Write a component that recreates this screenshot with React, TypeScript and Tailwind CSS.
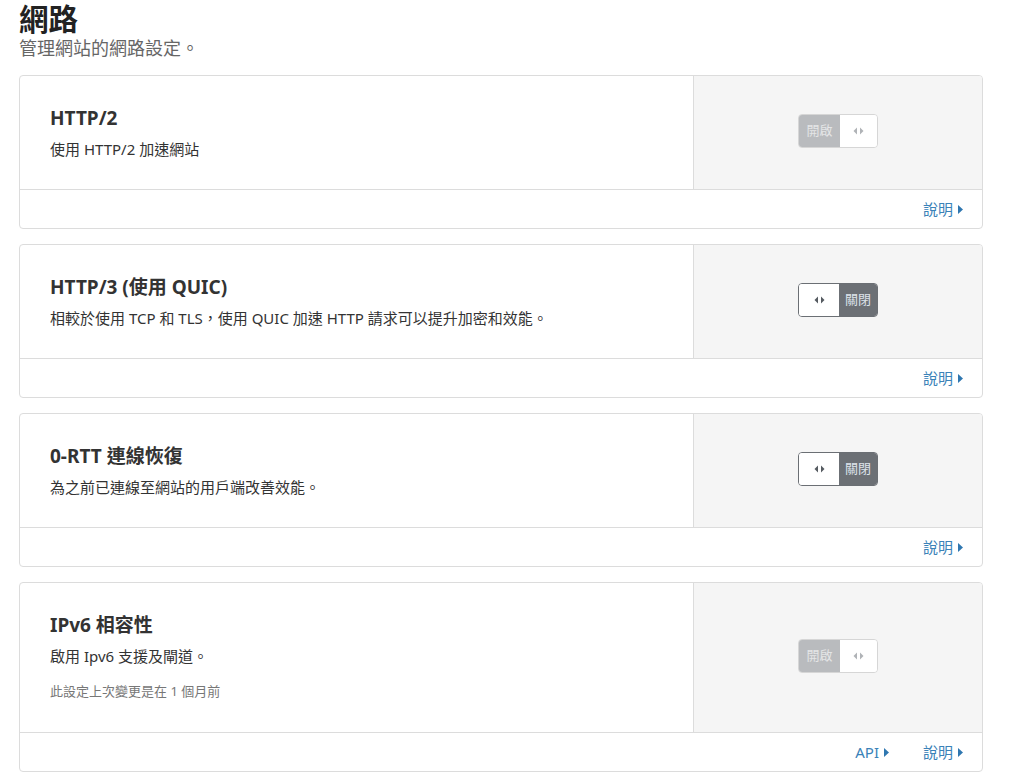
import React from "react";

type Setting = {
  title: string;
  desc: string;
  on: boolean;
  note?: string;
  api?: boolean;
};

const settings: Setting[] = [
  { title: "HTTP/2", desc: "使用 HTTP/2 加速網站", on: true },
  {
    title: "HTTP/3 (使用 QUIC)",
    desc: "相較於使用 TCP 和 TLS，使用 QUIC 加速 HTTP 請求可以提升加密和效能。",
    on: false,
  },
  { title: "0-RTT 連線恢復", desc: "為之前已連線至網站的用戶端改善效能。", on: false },
  {
    title: "IPv6 相容性",
    desc: "啟用 Ipv6 支援及閘道。",
    on: true,
    note: "此設定上次變更是在 1 個月前",
    api: true,
  },
];

function Arrows({ dark }: { dark: boolean }) {
  return (
    <svg width="11" height="8" viewBox="0 0 11 8" className={dark ? "fill-[#555a60]" : "fill-[#b0b3b7]"}>
      <path d="M4 0.5 L0.5 4 L4 7.5 Z" />
      <path d="M7 0.5 L10.5 4 L7 7.5 Z" />
    </svg>
  );
}

function Toggle({ on }: { on: boolean }) {
  if (on) {
    return (
      <div className="flex h-[34px] w-[80px] overflow-hidden rounded-[4px] border border-[#d6d6d6]">
        <div className="flex w-[41px] items-center justify-center bg-[#b9bbbe] text-[13px] text-[#e4e5e6]">
          開啟
        </div>
        <div className="flex flex-1 items-center justify-center bg-white">
          <Arrows dark={false} />
        </div>
      </div>
    );
  }
  return (
    <div className="flex h-[34px] w-[80px] overflow-hidden rounded-[4px] border border-[#6b6f74]">
      <div className="flex w-[40px] items-center justify-center bg-white">
        <Arrows dark />
      </div>
      <div className="flex flex-1 items-center justify-center bg-[#6c7075] text-[13px] text-[#dde3ea]">
        關閉
      </div>
    </div>
  );
}

function Link({ label }: { label: string }) {
  return (
    <a className="flex items-center gap-[5px] text-[15px] text-[#3a82b8]">
      {label}
      <svg width="5" height="9" viewBox="0 0 5 9" className="fill-[#2f77b0]">
        <path d="M0 0 L5 4.5 L0 9 Z" />
      </svg>
    </a>
  );
}

export default function App() {
  return (
    <div
      className="min-h-screen bg-white px-[19px] pb-[10px]"
      style={{ fontFamily: '"Noto Sans", "Noto Sans CJK TC", sans-serif' }}
    >
      <h1 className="text-[29.5px] leading-[37px] font-bold text-[#222]">網路</h1>
      <p className="text-[18px] leading-[22px] text-[#666]">管理網站的網路設定。</p>

      <div className="mt-[16px] flex w-[964px] flex-col gap-[15px]">
        {settings.map((s) => (
          <div key={s.title} className="overflow-hidden rounded-[4px] border border-[#dcdcdc] bg-white">
            <div className="flex border-b border-[#dcdcdc]">
              <div className={`flex-1 pt-[29px] pl-[30px] pr-[20px] ${s.note ? "pb-[32px]" : "pb-[29px]"}`}>
                <h2 className="text-[19px] leading-[26px] font-bold text-[#333]">{s.title}</h2>
                <p className="mt-[7px] text-[15px] leading-[22px] text-[#333]">{s.desc}</p>
                {s.note && (
                  <p className="mt-[15px] text-[13px] leading-[18px] text-[#777]">{s.note}</p>
                )}
              </div>
              <div className="flex w-[289px] items-center justify-center border-l border-[#dcdcdc] bg-[#f5f5f5] pb-[4px]">
                <Toggle on={s.on} />
              </div>
            </div>
            <div className="flex justify-end gap-[34px] py-[9px] pr-[19px] leading-[20px]">
              {s.api && <Link label="API" />}
              <Link label="說明" />
            </div>
          </div>
        ))}
      </div>
    </div>
  );
}
